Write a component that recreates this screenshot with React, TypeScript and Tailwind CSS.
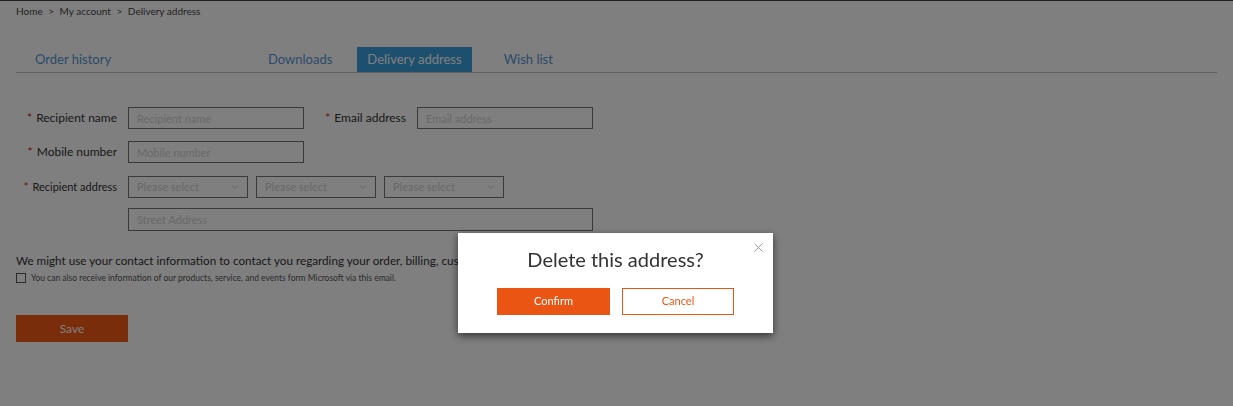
import { ChevronDown, X } from 'lucide-react';

const font = "font-['Segoe_UI',Lato,'Noto_Sans',sans-serif]";

function Field({ label, placeholder, width = 'w-[176px]' }: { label: string; placeholder: string; width?: string }) {
  return (
    <input
      readOnly
      placeholder={placeholder}
      aria-label={label}
      className={`${width} h-[22px] border border-[#747474] px-2 text-[11px] text-[#333] placeholder:text-[#d2d2d2] outline-none`}
    />
  );
}

function Label({ children, small }: { children: string; small?: boolean }) {
  return (
    <label className={`flex items-center justify-end pr-[11px] text-[#333] ${small ? 'text-[11px]' : 'text-[12px]'}`}>
      <span className="mr-1 text-[#d01818]">*</span>
      {children}
    </label>
  );
}

function Select() {
  return (
    <div className="flex h-[22px] w-[120px] items-center justify-between border border-[#747474] pl-2 pr-[6px] text-[11px] text-[#d2d2d2]">
      <span>Please select</span>
      <ChevronDown className="h-3 w-3 text-[#bdbdbd]" strokeWidth={1.5} />
    </div>
  );
}

export default function App() {
  return (
    <div className={`relative min-h-[406px] border-t border-[#3a3a3a] bg-white ${font}`}>
      {/* Breadcrumb */}
      <div className="px-4 pt-[3px] text-[10px] text-[#444]">
        Home <span className="mx-[3px]">&gt;</span> My account <span className="mx-[3px]">&gt;</span> Delivery address
      </div>

      {/* Tabs */}
      <div className="mx-4 mt-[28px] flex h-[26px] items-stretch border-b border-[#c4c4c4] text-[13px] text-[#5595d8]">
        <div className="flex w-[242px] items-center pl-[19px]">Order history</div>
        <div className="flex items-center px-[10px]">Downloads</div>
        <div className="ml-[15px] flex items-center bg-[#3a9edc] px-[10px] text-white">Delivery address</div>
        <div className="ml-[22px] flex items-center px-[10px]">Wish list</div>
      </div>

      {/* Form */}
      <div className="mt-[34px] flex flex-col pl-[16px]">
        <div className="flex h-[22px]">
          <div className="flex w-[112px] justify-end"><Label>Recipient name</Label></div>
          <Field label="Recipient name" placeholder="Recipient name" />
          <div className="flex w-[113px] justify-end"><Label>Email address</Label></div>
          <Field label="Email address" placeholder="Email address" />
        </div>
        <div className="mt-[12px] flex h-[22px]">
          <div className="flex w-[112px] justify-end"><Label>Mobile number</Label></div>
          <Field label="Mobile number" placeholder="Mobile number" />
        </div>
        <div className="mt-[13px] flex h-[22px]">
          <div className="flex w-[112px] justify-end"><Label small>Recipient address</Label></div>
          <div className="flex gap-[8px]">
            <Select />
            <Select />
            <Select />
          </div>
        </div>
        <div className="mt-[10px] flex pl-[112px]">
          <Field label="Street Address" placeholder="Street Address" width="w-[465px] h-[23px]" />
        </div>

        <p className="mt-[21px] text-[11.7px] text-[#333]">
          We might use your contact information to contact you regarding your order, billing, customer service and more.
        </p>
        <div className="mt-[2px] flex items-center gap-[5px]">
          <span className="h-[10px] w-[10px] border border-[#555] bg-white" />
          <span className="text-[8.5px] text-[#555]">
            You can also receive information of our products, service, and events form Microsoft via this email.
          </span>
        </div>

        <button className="mt-[31px] h-[27px] w-[112px] bg-[#f25a16] text-[12px] text-white">Save</button>
      </div>

      {/* Overlay */}
      <div className="fixed inset-0 bg-black/50" />

      {/* Modal */}
      <div className="fixed left-[458px] top-[233px] flex h-[100px] w-[315px] flex-col items-center bg-white shadow-[0_3px_8px_rgba(0,0,0,0.6)]">
        <X className="absolute right-[7px] top-[7px] h-[15px] w-[15px] text-[#a0a0a0]" strokeWidth={1.6} />
        <h2 className="mt-[11px] text-[20px] text-[#333]">Delete this address?</h2>
        <div className="mt-[14px] flex gap-[12px]">
          <button className="h-[27px] w-[113px] bg-[#ea5513] text-[11px] text-white">Confirm</button>
          <button className="h-[27px] w-[112px] border border-[#ea5513] text-[11px] text-[#ea5513]">Cancel</button>
        </div>
      </div>
    </div>
  );
}
